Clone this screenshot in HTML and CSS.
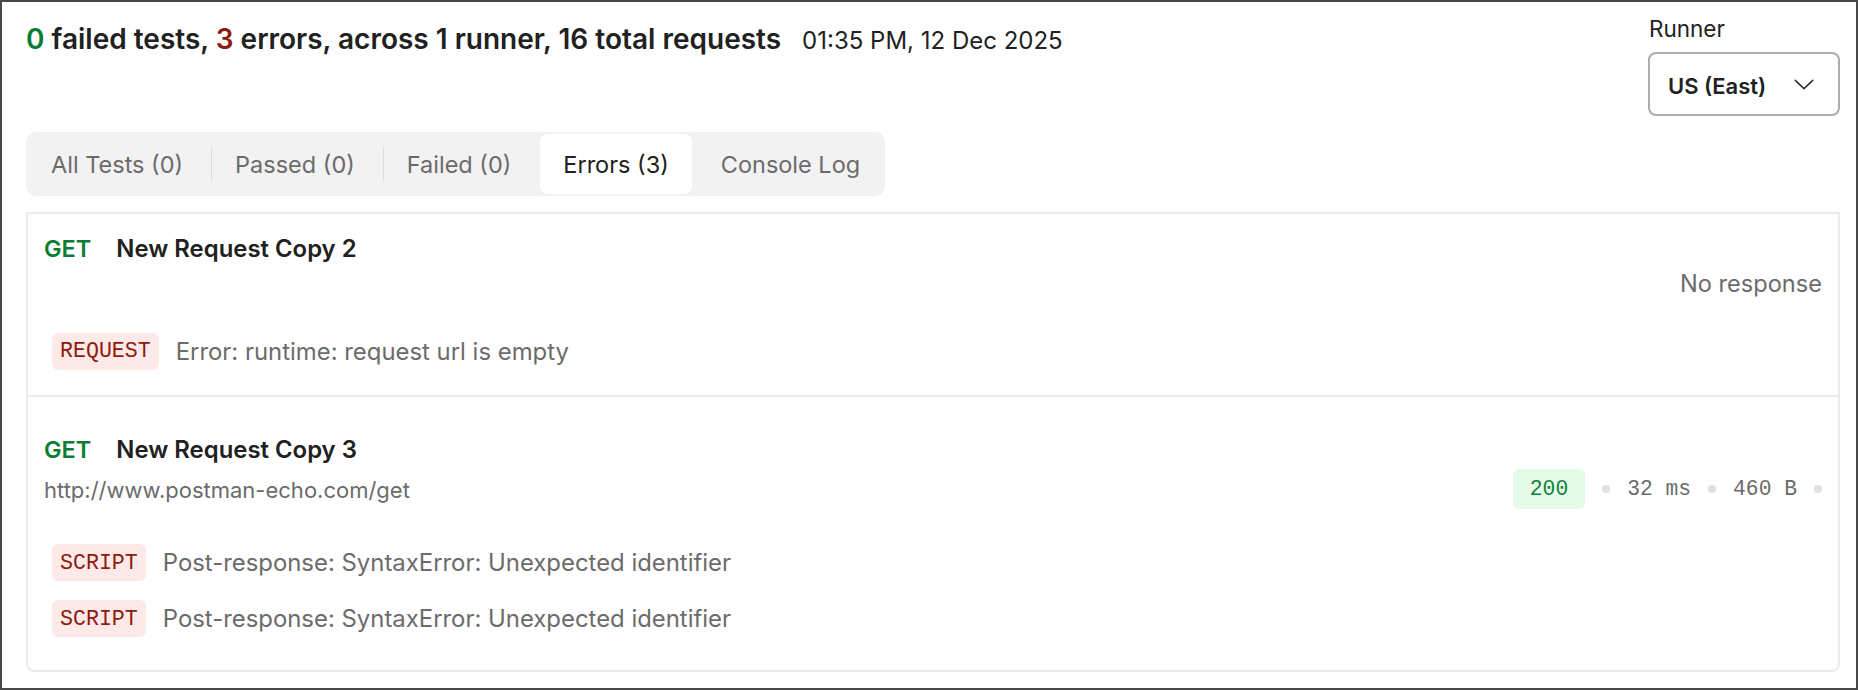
FILE: index.html
```html
<!DOCTYPE html>
<html lang="en">
<head>
<meta charset="utf-8">
<title>Run results</title>
<link rel="stylesheet" href="styles.css">
</head>
<body>
<div class="frame">
  <header class="top">
    <div class="summary">
      <h1 class="headline"><span class="ok">0</span> failed tests, <span class="bad">3</span> errors, across 1 runner, 16 total requests</h1>
      <span class="stamp">01:35 PM, 12 Dec 2025</span>
    </div>
    <div class="runner">
      <label class="runner-label">Runner</label>
      <button class="select" type="button">
        <span class="select-value">US (East)</span>
        <svg class="chev" width="20" height="11" viewBox="0 0 20 11" aria-hidden="true"><path d="M1.3 1.3L10 9.7 18.7 1.3" fill="none" stroke="#333" stroke-width="1.6" stroke-linecap="round" stroke-linejoin="round"/></svg>
      </button>
    </div>
  </header>

  <nav class="tabs">
    <span class="tab">All Tests (0)</span>
    <span class="sep"></span>
    <span class="tab">Passed (0)</span>
    <span class="sep"></span>
    <span class="tab">Failed (0)</span>
    <span class="sep sep-hidden"></span>
    <span class="tab tab-active">Errors (3)</span>
    <span class="sep sep-hidden"></span>
    <span class="tab">Console Log</span>
  </nav>

  <section class="results">
    <article class="card card-first">
      <div class="req-line">
        <span class="method">GET</span>
        <span class="req-name">New Request Copy 2</span>
      </div>
      <div class="meta">
        <span class="url"></span>
        <span class="muted">No response</span>
      </div>
      <ul class="errors">
        <li class="err"><span class="tag">REQUEST</span><span class="err-text">Error: runtime: request url is empty</span></li>
      </ul>
    </article>
    <article class="card card-second">
      <div class="req-line">
        <span class="method">GET</span>
        <span class="req-name">New Request Copy 3</span>
      </div>
      <div class="meta">
        <span class="url">http://www.postman-echo.com/get</span>
        <span class="stats">
          <span class="code">200</span>
          <span class="dot"></span>
          <span class="stat">32 ms</span>
          <span class="dot"></span>
          <span class="stat">460 B</span>
          <span class="dot"></span>
        </span>
      </div>
      <ul class="errors">
        <li class="err"><span class="tag">SCRIPT</span><span class="err-text">Post-response: SyntaxError: Unexpected identifier</span></li>
        <li class="err"><span class="tag">SCRIPT</span><span class="err-text">Post-response: SyntaxError: Unexpected identifier</span></li>
      </ul>
    </article>
  </section>
</div>
</body>
</html>
```
FILE: styles.css
```css
* { box-sizing: border-box; }
html, body { margin: 0; padding: 0; background: #fff; }
body { font-family: Inter, "Noto Sans", sans-serif; color: #212121; }

.frame {
  width: 1858px;
  height: 690px;
  border: 2px solid #474747;
  padding: 0 16px 0 24px;
  overflow: hidden;
}

.top { display: flex; justify-content: space-between; align-items: flex-start; }
.summary { display: flex; align-items: baseline; gap: 21px; padding-top: 19px; }
.headline { margin: 0; font-size: 28px; font-weight: 600; line-height: 36px; }
.ok { color: #0b7d33; }
.bad { color: #8e1b10; }
.stamp { font-size: 24px; }

.runner { display: flex; flex-direction: column; align-items: flex-start; padding-top: 13px; }
.runner-label { font-size: 22.5px; line-height: 28px; margin-bottom: 9px; padding-left: 1px; }
.select {
  width: 192px; height: 64px;
  border: 2px solid #adadad; border-radius: 8px; background: #fff;
  display: flex; align-items: center; justify-content: space-between;
  padding: 0 24px 0 18px; font-family: inherit; color: #212121; cursor: pointer;
}
.select-value { font-size: 22px; font-weight: 600; margin-top: 4px; }
.chev { display: block; }

.tabs {
  display: inline-flex; align-items: center;
  margin-top: 16px; padding: 2px; height: 64px;
  background: #f2f2f2; border-radius: 10px;
}
.tab { height: 60px; display: flex; align-items: center; padding: 0 23px; font-size: 23.5px; color: #6b6b6b; border-radius: 8px; }
.tab-active { background: #fff; color: #212121; }
.sep { width: 1px; height: 32px; margin-left: 5px; background: #dcdcdc; }
.sep-hidden { background: transparent; }

.results { margin-top: 16px; border: 2px solid #ebebeb; border-radius: 0 0 8px 8px; }
.card { padding: 19px 16px 20px; }
.card-second { border-top: 2px solid #ebebeb; padding-top: 37px; padding-bottom: 27px; }
.req-line { display: flex; gap: 25px; line-height: 32px; font-size: 23.9px; font-weight: 600; }
.method { color: #0b7d33; font-size: 23.5px; }
.meta { display: flex; justify-content: space-between; align-items: center; margin-top: 3px; min-height: 32px; line-height: 32px; font-size: 23.6px; color: #6b6b6b; }
.url { font-size: 22px; margin-top: 2px; }
.muted { color: #6b6b6b; }
.stats { display: flex; align-items: center; gap: 17px; font-family: "Liberation Mono", monospace; font-size: 21.3px; }
.code { background: #e5fbe9; color: #13803a; height: 40px; padding: 0 17px; border-radius: 6px; display: flex; align-items: center; }
.dot { width: 8px; height: 8px; border-radius: 50%; background: #e0e0e0; }
.errors { list-style: none; margin: 27px 0 0; padding: 0 0 0 8px; display: flex; flex-direction: column; gap: 8px; }
.card-second .errors { margin-top: 29.5px; }
.err { display: flex; align-items: center; gap: 17px; height: 48px; }
.tag { font-family: "Liberation Mono", monospace; font-size: 21.6px; color: #8e1b10; background: #fde9e7; border-radius: 6px; height: 37px; padding: 0 8px; display: flex; align-items: center; }
.err-text { font-size: 23.9px; color: #6b6b6b; }
```
